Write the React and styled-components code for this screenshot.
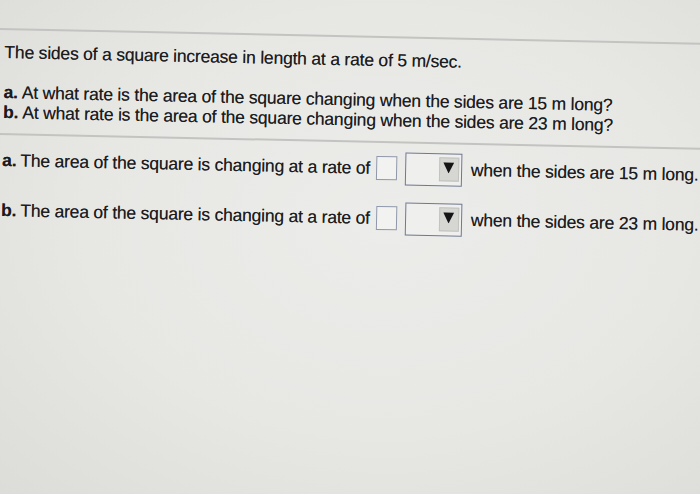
import React from "react";
import styled, { createGlobalStyle } from "styled-components";

const Global = createGlobalStyle`
  html, body { margin: 0; padding: 0; }
  body {
    width: 700px; height: 494px; overflow: hidden;
    background: #e4e4e1;
    font-family: "Liberation Sans", Arial, sans-serif;
  }
`;

const Page = styled.div`
  width: 700px;
  height: 494px;
  overflow: hidden;
  background: radial-gradient(ellipse at 55% 45%, #ecedea 0%, #e7e7e4 55%, #dcdcd8 100%);
`;

const Sheet = styled.div`
  width: 730px;
  transform: rotate(1.2deg);
  transform-origin: 0 0;
  color: #1b1b1e;
  font-size: 17.5px;
  letter-spacing: -0.2px;
  text-shadow: 0 0 0.4px rgba(20, 20, 25, 0.6);
`;

const Rule = styled.div`
  height: 2px;
  background: #c3c4c2;
  margin-top: ${(p) => p.$top || 0}px;
`;

const Intro = styled.p`
  margin: 11px 0 0 5px;
  line-height: 22px;
`;

const Questions = styled.div`
  margin: 19px 0 0 5px;
  display: flex;
  flex-direction: column;
  line-height: 20px;
`;

const Tag = styled.b`
  font-weight: bold;
  margin-right: 4px;
`;

const Answers = styled.div`
  display: flex;
  flex-direction: column;
  gap: 14px;
  margin: 7px 0 0 5px;
`;

const Row = styled.div`
  display: flex;
  align-items: center;
  height: 36px;
`;

const Box = styled.span`
  width: 21px;
  height: 24px;
  margin-left: 6px;
  border: 1px solid #8f97ab;
  background: #f2f2f0;
  box-sizing: border-box;
`;

const Select = styled.span`
  display: flex;
  width: 57px;
  height: 33px;
  margin-left: 8px;
  border: 1.5px solid #6f7791;
  background: #efefed;
  box-sizing: border-box;
  justify-content: flex-end;
  align-items: center;
  padding: 0 2px;
`;

const Arrow = styled.span`
  width: 20px;
  height: 24px;
  background: #d6d6d3;
  border: 1px solid #c2c2bf;
  display: flex;
  align-items: flex-start;
  justify-content: center;
  padding-top: 4px;
  box-sizing: border-box;
`;

const Tail = styled.span`
  margin-left: 9px;
  white-space: nowrap;
`;

function Answer({ tag, len }) {
  return (
    <Row>
      <span><Tag>{tag}.</Tag>The area of the square is changing at a rate of</span>
      <Box />
      <Select>
        <Arrow>
          <svg width="11" height="11" viewBox="0 0 11 11"><path d="M0 0 H11 L5.5 11 Z" fill="#151515" /></svg>
        </Arrow>
      </Select>
      <Tail>when the sides are {len} m long.</Tail>
    </Row>
  );
}

export default function App() {
  return (
    <Page>
      <Global />
      <Sheet>
        <Rule $top={28} />
        <Intro>The sides of a square increase in length at a rate of 5 m/sec.</Intro>
        <Questions>
          <span><Tag>a.</Tag>At what rate is the area of the square changing when the sides are 15 m long?</span>
          <span><Tag>b.</Tag>At what rate is the area of the square changing when the sides are 23 m long?</span>
        </Questions>
        <Rule $top={11} />
        <Answers>
          <Answer tag="a" len={15} />
          <Answer tag="b" len={23} />
        </Answers>
      </Sheet>
    </Page>
  );
}
